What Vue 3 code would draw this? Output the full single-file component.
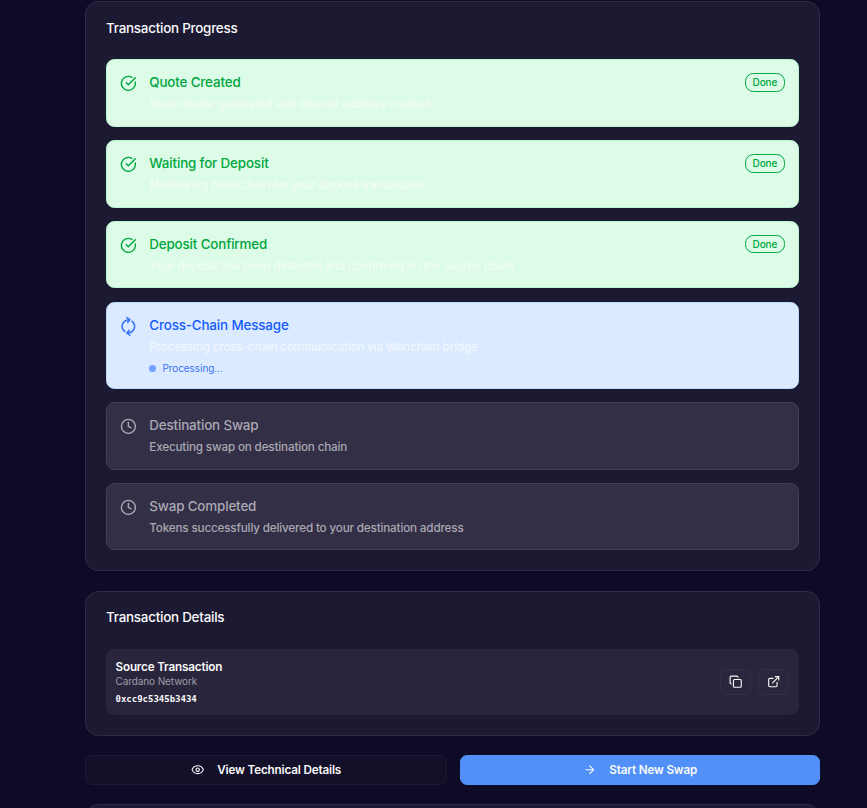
<script setup>
const steps = [
  { title: 'Quote Created', text: 'Swap quote generated and deposit address created', state: 'done' },
  { title: 'Waiting for Deposit', text: 'Monitoring blockchain for your deposit transaction', state: 'done' },
  { title: 'Deposit Confirmed', text: 'Your deposit has been detected and confirmed on the source chain', state: 'done' },
  { title: 'Cross-Chain Message', text: 'Processing cross-chain communication via Wanchain bridge', state: 'active' },
  { title: 'Destination Swap', text: 'Executing swap on destination chain', state: 'pending' },
  { title: 'Swap Completed', text: 'Tokens successfully delivered to your destination address', state: 'pending' },
]
</script>

<template>
  <main class="page">
    <section class="card progress">
      <h2>Transaction Progress</h2>
      <ul class="steps">
        <li v-for="s in steps" :key="s.title" class="step" :class="s.state">
          <svg v-if="s.state === 'done'" class="icon" viewBox="0 0 24 24"><path d="M21.801 10A10 10 0 1 1 17 3.335" /><path d="m9 11 3 3L22 4" /></svg>
          <svg v-else-if="s.state === 'active'" class="icon spin" viewBox="0 0 24 24"><path d="M3 12a9 9 0 0 1 9-9 9.75 9.75 0 0 1 6.74 2.74L21 8" /><path d="M21 3v5h-5" /><path d="M21 12a9 9 0 0 1-9 9 9.75 9.75 0 0 1-6.74-2.74L3 16" /><path d="M8 16H3v5" /></svg>
          <svg v-else class="icon" viewBox="0 0 24 24"><circle cx="12" cy="12" r="10" /><path d="M12 6v6l4 2" /></svg>
          <div class="body">
            <h3>{{ s.title }}</h3>
            <p>{{ s.text }}</p>
            <div v-if="s.state === 'active'" class="working"><i class="dot"></i><span>Processing...</span></div>
          </div>
          <span v-if="s.state === 'done'" class="badge">Done</span>
        </li>
      </ul>
    </section>

    <section class="card details">
      <h2>Transaction Details</h2>
      <div class="source">
        <div class="info">
          <strong>Source Transaction</strong>
          <span class="network">Cardano Network</span>
          <code>0xcc9c5345b3434</code>
        </div>
        <button class="tool"><svg viewBox="0 0 24 24"><rect width="14" height="14" x="8" y="8" rx="2" /><path d="M4 16c-1.1 0-2-.9-2-2V4c0-1.1.9-2 2-2h10c1.1 0 2 .9 2 2" /></svg></button>
        <button class="tool"><svg viewBox="0 0 24 24"><path d="M15 3h6v6" /><path d="M10 14 21 3" /><path d="M18 13v6a2 2 0 0 1-2 2H5a2 2 0 0 1-2-2V8a2 2 0 0 1 2-2h6" /></svg></button>
      </div>
    </section>

    <div class="actions">
      <button class="action outline"><svg viewBox="0 0 24 24"><path d="M2.062 12.348a1 1 0 0 1 0-.696 10.75 10.75 0 0 1 19.876 0 1 1 0 0 1 0 .696 10.75 10.75 0 0 1-19.876 0" /><circle cx="12" cy="12" r="3" /></svg><span>View Technical Details</span></button>
      <button class="action primary"><svg viewBox="0 0 24 24"><path d="M5 12h14" /><path d="m12 5 7 7-7 7" /></svg><span>Start New Swap</span></button>
    </div>

    <section class="card next"></section>
  </main>
</template>

<style>
body { background: #0e0b26; }
</style>

<style scoped>
* { box-sizing: border-box; }
.page {
  height: 808px;
  overflow: hidden;
  padding: 1px 47px 0 85px;
  background: #0e0b26;
  color: #fafafa;
  font-family: Inter, sans-serif;
}
h2, h3, p, ul { margin: 0; padding: 0; }
.card {
  border: 1px solid #302c46;
  border-radius: 13.4px;
  background: #1c1932;
  padding: 0 20px;
}
.progress { height: 570px; }
h2 { padding-top: 16px; font-size: 13.4px; line-height: 20px; font-weight: 500; letter-spacing: -0.23px; }
.steps { display: grid; gap: 13px; margin-top: 21px; list-style: none; }
.step {
  display: flex;
  align-items: flex-start;
  height: 68px;
  padding: 13px;
  border: 1px solid;
  border-radius: 8.4px;
}
.step:nth-child(3n) { height: 67px; }
.step:nth-child(3) { margin-bottom: 1px; }
svg { fill: none; stroke: currentColor; stroke-width: 2; stroke-linecap: round; stroke-linejoin: round; flex: none; }
.icon { width: 16.75px; height: 16.75px; margin: 1.6px 12.9px 0 -0.4px; }
.body { flex: 1; }
h3 { margin-top: -1px; font-size: 13.4px; line-height: 20px; font-weight: 500; letter-spacing: -0.15px; }
.step p { margin-top: 4px; font-size: 11.7px; line-height: 17px; font-weight: 450; letter-spacing: -0.17px; }
.done { background: #dcfce7; border-color: #b9f8cf; color: #00a63e; }
.done p { color: #f1fdf5; }
.step.active { height: 87px; background: #dbeafe; border-color: #bedbff; color: #155dfc; }
.active p { color: #f1f6ff; }
.spin { transform: rotate(-55deg); color: #3b74fb; stroke-width: 2.3; }
.pending { background: #332f47; border-color: #444057; color: #aaa8b2; }
.badge {
  height: 19px;
  padding: 0 6.8px;
  border: 1px solid #00a63e;
  border-radius: 8.4px;
  font-size: 10px;
  line-height: 17px;
  font-weight: 500;
  letter-spacing: -0.12px;
}
.step:nth-child(3) .badge { height: 18px; }
.working { display: flex; align-items: center; gap: 6.2px; margin-top: 6px; font-size: 10px; line-height: 13px; letter-spacing: -0.07px; color: #3b73f5; }
.dot { width: 7px; height: 7px; border-radius: 50%; background: #73a1ff; }
.details { height: 145px; margin-top: 20px; }
.details h2 { padding-top: 15px; }
.source {
  display: flex;
  align-items: center;
  gap: 7px;
  height: 66px;
  margin-top: 22px;
  padding: 0 10px 0 9.5px;
  border-radius: 8.4px;
  background: #28253c;
}
.info { flex: 1; display: flex; flex-direction: column; }
strong { font-size: 11.7px; line-height: 17px; font-weight: 600; letter-spacing: -0.17px; }
.network { margin-top: -1px; font-size: 10px; line-height: 13px; letter-spacing: -0.1px; color: #9f9da8; }
code { margin-top: 5px; font: 700 9px/13px "DejaVu Sans Mono", monospace; }
button { font-family: inherit; color: inherit; display: flex; align-items: center; justify-content: center; padding: 0; border-radius: 7px; }
.tool { width: 31px; height: 26px; border: 1px solid #343047; background: #2a263e; }
.tool svg { width: 13.4px; height: 13.4px; }
.actions { display: grid; grid-template-columns: 362px 360px; gap: 13px; margin-top: 19px; }
.action { height: 30px; gap: 13px; border: 1px solid #1d1a34; background: #131029; font-size: 11.7px; font-weight: 600; letter-spacing: -0.16px; }
.action svg { width: 13.4px; height: 13.4px; }
.primary { border-color: #5090f8; background: #5090f8; }
.next { height: 60px; margin-top: 19px; }
</style>
